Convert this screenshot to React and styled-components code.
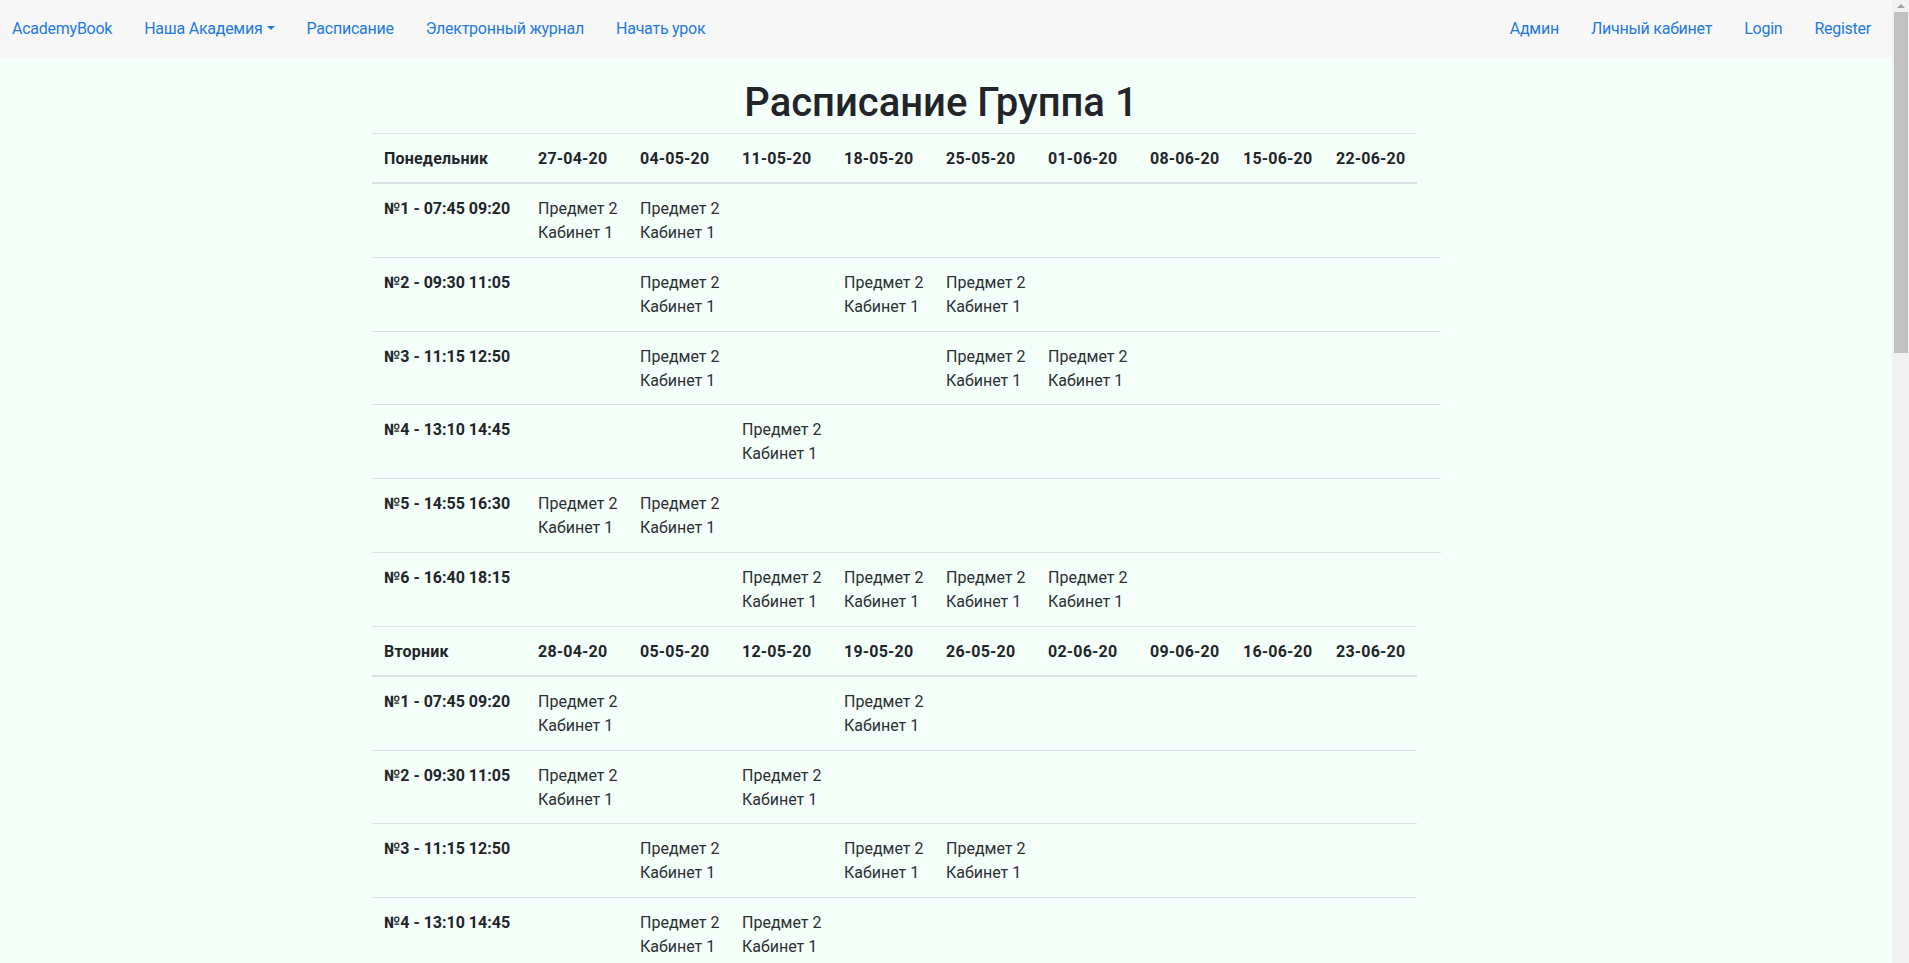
import styled, { createGlobalStyle } from "styled-components";

const GlobalStyle = createGlobalStyle`
  html, body {
    margin: 0;
    background: #f5fffa;
  }
  body {
    font-family: Roboto, "Liberation Sans", sans-serif;
    font-size: 16px;
    line-height: 1.5;
    color: #212529;
  }
`;

// Страница оставляет справа место под полосу прокрутки
const Page = styled.div`
  padding-right: 17px;
`;

// Полоса прокрутки окна, нарисованная поверх страницы
const ScrollTrack = styled.div`
  position: fixed;
  top: 0;
  right: 0;
  width: 17px;
  height: 100vh;
  background: #f1f1f1;
`;

const ScrollArrow = styled.div`
  width: 0;
  height: 0;
  margin: 4px auto 0;
  border-left: 4px solid transparent;
  border-right: 4px solid transparent;
  border-bottom: 4px solid #a3a3a3;
`;

const ScrollThumb = styled.div`
  margin: 4px 1px 0 2px;
  height: 341px;
  background: #c1c1c1;
`;

// Верхняя навигация
const Navbar = styled.nav`
  display: flex;
  align-items: center;
  justify-content: space-between;
  height: 58px;
  padding: 0 5px 0 12px;
  background: #f7f7f7;
`;

const NavGroup = styled.div`
  display: flex;
  align-items: center;
`;

const Brand = styled.a`
  margin-right: 16px;
  color: #1f7ae0;
  text-decoration: none;
  white-space: nowrap;
  letter-spacing: -0.25px;
`;

const NavLink = styled.a`
  padding: 0 16px;
  color: #1f7ae0;
  text-decoration: none;
  white-space: nowrap;
  letter-spacing: -0.25px;
`;

const DropdownLink = styled(NavLink)`
  &::after {
    content: "";
    display: inline-block;
    margin-left: 0.255em;
    vertical-align: 0.255em;
    border-top: 0.3em solid;
    border-right: 0.3em solid transparent;
    border-left: 0.3em solid transparent;
    border-bottom: 0;
  }
`;

// Контент
const Main = styled.main`
  width: 1148px;
  margin: 0 auto;
  padding: 21px 0 16px;
`;

const Title = styled.h1`
  margin: 0 0 6px;
  padding-right: 10px;
  font-size: 40px;
  font-weight: 500;
  line-height: 48px;
  text-align: center;
  color: #212529;
`;

const Table = styled.table`
  width: 1069px;
  table-layout: fixed;
  border-collapse: collapse;
`;

const HeadCell = styled.th`
  padding: 13px 12px 11px;
  text-align: left;
  font-weight: 700;
  vertical-align: bottom;
  white-space: nowrap;
  letter-spacing: 0.2px;
  border-top: 1px solid #dee2e6;
  border-bottom: 2px solid #dee2e6;
`;

const RowHead = styled.th`
  padding: 13px 12px 11.8px;
  text-align: left;
  font-weight: 700;
  vertical-align: top;
  white-space: nowrap;
  border-top: 1px solid #dee2e6;
`;

const Cell = styled.td`
  padding: 13px 12px 11.8px;
  vertical-align: top;
  white-space: nowrap;
  color: #2b2f33;
  border-top: 1px solid #dee2e6;
`;

const Lesson = styled.span`
  display: block;
`;

const colWidths = [154, 102, 102, 102, 102, 102, 102, 93, 93, 93, 24];

const pairs = [
  "№1 - 07:45 09:20",
  "№2 - 09:30 11:05",
  "№3 - 11:15 12:50",
  "№4 - 13:10 14:45",
  "№5 - 14:55 16:30",
  "№6 - 16:40 18:15",
];

const days = [
  {
    name: "Понедельник",
    rows: [
      { cols: [0, 1], extra: false },
      { cols: [1, 3, 4], extra: true },
      { cols: [1, 4, 5], extra: true },
      { cols: [2], extra: true },
      { cols: [0, 1], extra: true },
      { cols: [2, 3, 4, 5], extra: true },
    ],
  },
  {
    name: "Вторник",
    rows: [
      { cols: [0, 3], extra: false },
      { cols: [0, 2], extra: false },
      { cols: [1, 3, 4], extra: false },
      { cols: [1, 2], extra: false },
      { cols: [0, 4], extra: false },
      { cols: [2, 5], extra: false },
    ],
  },
  {
    name: "Среда",
    rows: [
      { cols: [1, 2], extra: false },
      { cols: [0, 4], extra: true },
      { cols: [3], extra: true },
      { cols: [0, 2, 5], extra: true },
      { cols: [1], extra: true },
      { cols: [3, 4], extra: true },
    ],
  },
  {
    name: "Четверг",
    rows: [
      { cols: [0], extra: false },
      { cols: [2, 3], extra: false },
      { cols: [1, 5], extra: false },
      { cols: [0, 4], extra: false },
      { cols: [2], extra: false },
      { cols: [1, 3], extra: false },
    ],
  },
  {
    name: "Пятница",
    rows: [
      { cols: [3, 4], extra: false },
      { cols: [0, 1], extra: true },
      { cols: [2, 5], extra: true },
      { cols: [1], extra: true },
      { cols: [0, 3], extra: true },
      { cols: [4], extra: true },
    ],
  },
];

const pad = (n) => String(n).padStart(2, "0");

const datesFor = (dayIndex) =>
  Array.from({ length: 9 }, (_, w) => {
    const d = new Date(Date.UTC(2020, 3, 27 + dayIndex + w * 7));
    return `${pad(d.getUTCDate())}-${pad(d.getUTCMonth() + 1)}-${String(d.getUTCFullYear()).slice(2)}`;
  });

const App = () => {
  return (
    <Page>
      <GlobalStyle />
      <Navbar>
        <NavGroup>
          <Brand href="#">AcademyBook</Brand>
          <DropdownLink href="#">Наша Академия</DropdownLink>
          <NavLink href="#">Расписание</NavLink>
          <NavLink href="#">Электронный журнал</NavLink>
          <NavLink href="#">Начать урок</NavLink>
        </NavGroup>
        <NavGroup>
          <NavLink href="#">Админ</NavLink>
          <NavLink href="#">Личный кабинет</NavLink>
          <NavLink href="#">Login</NavLink>
          <NavLink href="#">Register</NavLink>
        </NavGroup>
      </Navbar>
      <Main>
        <Title>Расписание Группа 1</Title>
        <Table>
          <colgroup>
            {colWidths.map((w, i) => (
              <col key={i} style={{ width: w }} />
            ))}
          </colgroup>
          {days.map((day, di) => (
            <tbody key={day.name}>
              <tr>
                <HeadCell>{day.name}</HeadCell>
                {datesFor(di).map((date) => (
                  <HeadCell key={date}>{date}</HeadCell>
                ))}
              </tr>
              {day.rows.map((row, ri) => (
                <tr key={ri}>
                  <RowHead>{pairs[ri]}</RowHead>
                  {Array.from({ length: 9 }, (_, ci) => (
                    <Cell key={ci}>
                      {row.cols.includes(ci) && (
                        <>
                          <Lesson>Предмет 2</Lesson>
                          <Lesson>Кабинет 1</Lesson>
                        </>
                      )}
                    </Cell>
                  ))}
                  {row.extra && <Cell />}
                </tr>
              ))}
            </tbody>
          ))}
        </Table>
      </Main>
      <ScrollTrack>
        <ScrollArrow />
        <ScrollThumb />
      </ScrollTrack>
    </Page>
  );
};

export default App;
